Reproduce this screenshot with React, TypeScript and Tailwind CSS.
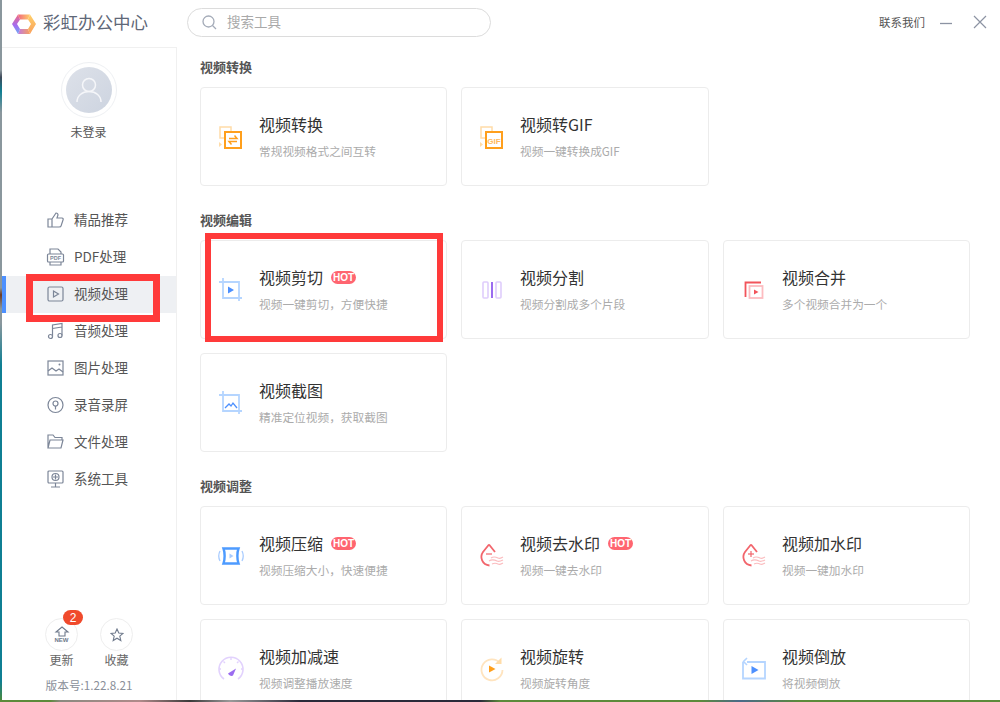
import type { ReactNode } from "react";

const cjk = "font-['Noto_Sans_CJK_SC','Noto_Sans',sans-serif]";

function Svg({ children, size = 30 }: { children: ReactNode; size?: number }) {
  return (
    <svg width={size} height={size} viewBox="0 0 30 30" fill="none" className="shrink-0">
      {children}
    </svg>
  );
}

const IconConvert = () => (
  <Svg>
    <rect x="4" y="5" width="11" height="11" stroke="#ffdca8" strokeWidth="1.5" />
    <path d="M3 20v5l3-2.500z" fill="#ffdca8" />
    <rect x="9" y="10" width="16" height="16" fill="#fff" stroke="#ff9f1c" strokeWidth="2" />
    <path d="M13 16.500h8l-2.500-3M21 19.500h-8l2.500 3" stroke="#ff9f1c" strokeWidth="1.500" />
  </Svg>
);

const IconGif = () => (
  <Svg>
    <rect x="4" y="5" width="11" height="11" stroke="#ffdca8" strokeWidth="1.5" />
    <path d="M3 20v5l3-2.500z" fill="#ffdca8" />
    <rect x="9" y="10" width="16" height="16" fill="#fff" stroke="#ff9f1c" strokeWidth="2" />
    <text x="17" y="21.500" textAnchor="middle" fontSize="8" fontWeight="700" fill="#ffb95e" fontFamily="Liberation Sans">GIF</text>
  </Svg>
);

const IconCut = ({ pic }: { pic?: boolean }) => (
  <Svg>
    <path d="M3 7h20v19M7 3v20h19" stroke="#b5d5ff" strokeWidth="1.800" />
    {pic ? (
      <path d="M9 20l4-4 2 2 2-3 4 5" stroke="#4d90fe" strokeWidth="1.300" />
    ) : (
      <path d="M12 11.500l6 3.500-6 3.500z" fill="#4d90fe" />
    )}
  </Svg>
);

const IconSplit = () => (
  <Svg>
    <rect x="6" y="7" width="5" height="16" rx="1" stroke="#dfcdfc" strokeWidth="1.600" />
    <rect x="19" y="7" width="5" height="16" rx="1" stroke="#dfcdfc" strokeWidth="1.600" />
    <path d="M15 7v16" stroke="#9b6cf0" strokeWidth="2" />
  </Svg>
);

const IconMerge = () => (
  <Svg>
    <path d="M6.500 22V7.500H22" stroke="#f2545b" strokeWidth="1.800" />
    <rect x="10.500" y="11" width="13" height="12" stroke="#fdbcc0" strokeWidth="1.800" />
    <path d="M15 14.500l4.500 2.500-4.500 2.500z" fill="#f2545b" />
  </Svg>
);

const IconCompress = () => (
  <Svg>
    <path d="M7.500 7.500h15c-1.500 4-1.500 11 0 15h-15c1.500-4 1.500-11 0-15z" stroke="#4d9bff" strokeWidth="2.400" />
    <path d="M13.500 12.500l4 2.500-4 2.500z" fill="#a9ccff" />
    <path d="M4 10c-1.500 3-1.500 7 0 10M26 10c1.500 3 1.500 7 0 10" stroke="#a9ccff" strokeWidth="1.300" />
  </Svg>
);

const IconSpeed = () => (
  <Svg>
    <path d="M8 25a12 12 0 1 1 14 0" stroke="#e2d2fd" strokeWidth="1.600" />
    <path d="M15 3v3M5 15H3M27 15h-2M7.500 7.500l1.500 1.500M22.500 7.500L21 9" stroke="#e2d2fd" strokeWidth="1.400" />
    <path d="M12 19.500l8-5-3 7c-1.500 1-4 0-5-2z" fill="#9b6cf0" />
  </Svg>
);

const IconDrop = ({ plus }: { plus?: boolean }) => (
  <Svg>
    <path d="M12 3.500L6 11c-3.500 5-1 13 6.500 13.500" stroke="#f2656c" strokeWidth="1.800" />
    <path d="M12 3.500L18 11" stroke="#f2656c" strokeWidth="1.800" />
    <path d="M9 13h6" stroke="#f2656c" strokeWidth="1.200" />
    {plus && <path d="M12 10v6" stroke="#f2656c" strokeWidth="1.200" />}
    <path d="M14 17c3-2 5-1 7 0s3 0 5-1M12 20c3-2 6-1 8 0s4 0 6-1M15 23c2-1 4-1 6 0s3 0 5-1" stroke="#fbbcbf" strokeWidth="1.200" />
  </Svg>
);

const IconRotate = () => (
  <Svg>
    <path d="M23 9a10.500 10.500 0 1 0 2.500 7" stroke="#ffe4bf" strokeWidth="1.800" />
    <path d="M24.500 3.500v6.500H18z" fill="#ffdca8" />
    <path d="M12 11.500l6.500 3.500-6.500 3.500z" fill="#ff9f1c" />
  </Svg>
);

const IconReverse = () => (
  <Svg>
    <path d="M8 8h18v16.500H4V8" stroke="#b5d5ff" strokeWidth="1.800" />
    <path d="M8 4L4.500 7.500 8 11" stroke="#b5d5ff" strokeWidth="1.600" />
    <path d="M12.500 12l7 4-7 4z" fill="#4d90fe" />
  </Svg>
);

const navIcon = { stroke: "#7c8698", strokeWidth: 1.2 };

const NavIcons: Record<string, ReactNode> = {
  thumb: (
    <path
      d="M2 9h4v8H2zM6 9l4-6c1.500 0 2 1 2 2l-1 3h5c1 0 1.500 1 1 2l-2 6c0 1-1 1-2 1H6"
      {...navIcon}
    />
  ),
  pdf: (
    <>
      <path d="M4 7V2h8l3 3v2M4 15v3h11v-3" {...navIcon} />
      <rect x="1.500" y="7" width="16" height="8" rx="1" {...navIcon} />
      <text x="9.500" y="13.300" textAnchor="middle" fontSize="5.500" fontWeight="700" fill="#7c8698" fontFamily="Liberation Sans">PDF</text>
    </>
  ),
  video: (
    <>
      <rect x="2" y="3" width="15" height="14" rx="1.500" {...navIcon} />
      <path d="M7.500 7l5 3-5 3z" {...navIcon} />
    </>
  ),
  music: (
    <>
      <circle cx="4.500" cy="15.500" r="2" {...navIcon} />
      <circle cx="14" cy="14.500" r="2" {...navIcon} />
      <path d="M6.500 15.500V4l9.500-1.500v12M6.500 7.500l9.500-1.500" {...navIcon} />
    </>
  ),
  image: (
    <>
      <rect x="2" y="3" width="15" height="14" {...navIcon} />
      <path d="M2 13l4-3 4 3 3-2 4 3" {...navIcon} />
      <circle cx="13.500" cy="6.500" r="1" fill="#7c8698" />
    </>
  ),
  record: (
    <>
      <circle cx="9.500" cy="10" r="7.500" {...navIcon} />
      <circle cx="9.500" cy="8.500" r="2.500" {...navIcon} />
      <path d="M9.500 11v3.500" {...navIcon} />
    </>
  ),
  folder: <path d="M2 16V3h5l2 2.500h7V8M2 16l2-8h13l-2 8z" {...navIcon} />,
  tool: (
    <>
      <rect x="2" y="2" width="15" height="12" rx="1" {...navIcon} />
      <circle cx="9.500" cy="8" r="3.500" {...navIcon} />
      <path d="M9.500 14v3.500M5 18h9M7 8h5M9.500 5.500v5" {...navIcon} />
    </>
  ),
};

const nav = [
  { label: "精品推荐", icon: "thumb" },
  { label: "PDF处理", icon: "pdf" },
  { label: "视频处理", icon: "video", active: true },
  { label: "音频处理", icon: "music" },
  { label: "图片处理", icon: "image" },
  { label: "录音录屏", icon: "record" },
  { label: "文件处理", icon: "folder" },
  { label: "系统工具", icon: "tool" },
];

type Tool = { title: string; desc: string; icon: ReactNode; hot?: boolean };

const sections: { name: string; tools: Tool[] }[] = [
  {
    name: "视频转换",
    tools: [
      { title: "视频转换", desc: "常规视频格式之间互转", icon: <IconConvert /> },
      { title: "视频转GIF", desc: "视频一键转换成GIF", icon: <IconGif /> },
    ],
  },
  {
    name: "视频编辑",
    tools: [
      { title: "视频剪切", desc: "视频一键剪切，方便快捷", icon: <IconCut />, hot: true },
      { title: "视频分割", desc: "视频分割成多个片段", icon: <IconSplit /> },
      { title: "视频合并", desc: "多个视频合并为一个", icon: <IconMerge /> },
      { title: "视频截图", desc: "精准定位视频，获取截图", icon: <IconCut pic /> },
    ],
  },
  {
    name: "视频调整",
    tools: [
      { title: "视频压缩", desc: "视频压缩大小，快速便捷", icon: <IconCompress />, hot: true },
      { title: "视频去水印", desc: "视频一键去水印", icon: <IconDrop />, hot: true },
      { title: "视频加水印", desc: "视频一键加水印", icon: <IconDrop plus /> },
      { title: "视频加减速", desc: "视频调整播放速度", icon: <IconSpeed /> },
      { title: "视频旋转", desc: "视频旋转角度", icon: <IconRotate /> },
      { title: "视频倒放", desc: "将视频倒放", icon: <IconReverse /> },
    ],
  },
];

function ToolCard({ tool }: { tool: Tool }) {
  return (
    <div className="flex h-[99px] items-center rounded-[4px] border border-[#ececec] bg-white pl-[15px]">
      {tool.icon}
      <div className="ml-[13px] flex flex-col pb-[3px]">
        <div className="flex h-6 items-center">
          <span className="text-base text-[#333]">{tool.title}</span>
          {tool.hot && (
            <span className="mt-[1px] ml-[8px] flex h-[13px] w-[25px] items-center justify-center rounded-full bg-[#ff6570] font-['Liberation_Sans',sans-serif] text-[10px] font-bold text-white">
              HOT
            </span>
          )}
        </div>
        <span className="mt-[7px] h-4 text-[11.7px] leading-4 text-[#ababab]">{tool.desc}</span>
      </div>
    </div>
  );
}

function Sidebar() {
  return (
    <aside className="flex w-[175px] shrink-0 flex-col border-t border-r border-[#f0f0f0]">
      <div className="flex flex-col items-center pt-[14px] pr-[1px]">
        <div className="flex h-[56px] w-[56px] items-center justify-center rounded-full border border-[#eef0f3]">
          <div className="flex h-[46px] w-[46px] items-center justify-center rounded-full bg-gradient-to-br from-[#dde1e9] to-[#cdd4e0]">
            <svg width="30" height="30" viewBox="0 0 30 30" fill="none">
              <circle cx="15" cy="10" r="6.500" stroke="#f5f6f9" strokeWidth="1.500" />
              <path d="M3 27c0-6 5-10.500 12-10.500S27 21 27 27" stroke="#f5f6f9" strokeWidth="1.500" />
            </svg>
          </div>
        </div>
        <span className="mt-[6px] text-xs leading-4 text-[#555]">未登录</span>
      </div>

      <nav className="mt-[62px] flex flex-col">
        {nav.map((item) => (
          <div
            key={item.label}
            className={`flex h-[37px] items-center border-l-4 pb-[2px] pl-[40px] ${
              item.active ? "border-[#4d90fe] bg-[#eef0f3]" : "border-transparent"
            }`}
          >
            <svg width="20" height="20" viewBox="0 0 20 20" fill="none" className="shrink-0">
              {NavIcons[item.icon]}
            </svg>
            <span className="ml-[8px] text-[13.5px] text-[#555]">{item.label}</span>
          </div>
        ))}
      </nav>

      <div className="mt-auto flex flex-col items-center pb-[7px]">
        <div className="flex gap-[22px]">
          <div className="relative flex w-[33px] flex-col items-center">
            <span className="absolute -top-[8px] left-[18px] flex h-[15px] w-[20px] items-center justify-center rounded-full bg-[#f04a2c] font-['Liberation_Sans',sans-serif] text-xs text-white">
              2
            </span>
            <div className="flex h-[33px] w-[33px] flex-col items-center justify-center rounded-full border border-[#eeeeee]">
              <svg width="16" height="11" viewBox="0 0 16 11" fill="none">
                <path d="M8 1l6 5h-3v4H5V6H2z" stroke="#6f7a8c" strokeWidth="1.100" />
              </svg>
              <span className="font-['Liberation_Sans',sans-serif] text-[6px] leading-[7px] font-bold text-[#6f7a8c]">NEW</span>
            </div>
            <span className="-mt-[1px] text-xs leading-5 whitespace-nowrap text-[#666]">更新</span>
          </div>
          <div className="flex w-[33px] flex-col items-center">
            <div className="flex h-[33px] w-[33px] items-center justify-center rounded-full border border-[#eeeeee]">
              <svg width="14" height="14" viewBox="0 0 14 14" fill="none">
                <path d="M7 1l1.800 4 4.200.400-3.200 2.800 1 4.300L7 10.200 3.200 12.500l1-4.300L1 5.400 5.200 5z" stroke="#6f7a8c" strokeWidth="1.100" />
              </svg>
            </div>
            <span className="-mt-[1px] text-xs leading-5 whitespace-nowrap text-[#666]">收藏</span>
          </div>
        </div>
        <span className="mt-[7px] text-[11.7px] leading-4 text-[#8a8f99]">版本号:1.22.8.21</span>
      </div>
    </aside>
  );
}

export default function App() {
  return (
    <div className={`relative h-[702px] w-[1000px] overflow-hidden bg-[linear-gradient(to_bottom,#8a979d_0%,#8a979d_10%,#3f4a5a_11%,#0f7f93_13%,#8a979d_16%,#8a979d_41%,#6b3a22_42%,#8a979d_44%,#8a979d_46%,#0f7f93_52%,#0f7f93_97%,#4f8a35_100%)] pb-[2px] pl-[2px] ${cjk}`}>
      <div className="flex h-full flex-col bg-white">
        <header className="flex h-[47px] shrink-0 items-center">
          <svg width="24" height="22" viewBox="0 0 24 22" fill="none" className="ml-[10px]">
            <defs>
              <linearGradient id="logoTop" x1="0" y1="0" x2="1" y2="0">
                <stop offset="0" stopColor="#f2697c" />
                <stop offset="1" stopColor="#ffd06a" />
              </linearGradient>
              <linearGradient id="logoRight" x1="0" y1="0" x2="0" y2="1">
                <stop offset="0" stopColor="#ffd06a" />
                <stop offset="1" stopColor="#f9a05c" />
              </linearGradient>
              <linearGradient id="logoBottom" x1="0" y1="0" x2="1" y2="0">
                <stop offset="0" stopColor="#c07be0" />
                <stop offset="1" stopColor="#f9a05c" />
              </linearGradient>
              <linearGradient id="logoLeft" x1="0" y1="0" x2="0" y2="1">
                <stop offset="0" stopColor="#f2697c" />
                <stop offset="0.550" stopColor="#a56cf0" />
                <stop offset="1" stopColor="#6fa8f5" />
              </linearGradient>
            </defs>
            <path d="M6 1.500h12L16 6.500H8z" fill="url(#logoTop)" />
            <path d="M18 1.500L24 11l-6 10-2-5 3-5-3-4.500z" fill="url(#logoRight)" />
            <path d="M18 21H6l2-5h8z" fill="url(#logoBottom)" />
            <path d="M6 21L0 11l6-9.500 2 5L5 11l3 5z" fill="url(#logoLeft)" />
          </svg>
          <span className="mb-[2px] ml-[7px] text-[17.5px] text-[#5f6878]">彩虹办公中心</span>
          <div className="mb-[2px] ml-[39px] flex h-[29px] w-[304px] items-center rounded-full border border-[#dcdcdc] pl-[13px]">
            <svg width="17" height="17" viewBox="0 0 17 17" fill="none">
              <circle cx="7.500" cy="7.500" r="5.500" stroke="#a4abb8" strokeWidth="1.300" />
              <path d="M11.500 11.500l3.500 3.500" stroke="#a4abb8" strokeWidth="1.300" />
            </svg>
            <span className="mb-[3px] ml-[9px] text-[13.5px] text-[#a9a9a9]">搜索工具</span>
          </div>
          <span className="mb-[2px] ml-auto text-[11.5px] text-[#555]">联系我们</span>
          <svg width="14" height="14" viewBox="0 0 14 14" fill="none" className="mb-[2px] ml-[14px]">
            <path d="M1 7.500h12" stroke="#8c93a3" strokeWidth="1.300" />
          </svg>
          <svg width="14" height="14" viewBox="0 0 14 14" fill="none" className="mr-[13px] mb-[3px] ml-[20px]">
            <path d="M1 1l12 12M13 1L1 13" stroke="#8c93a3" strokeWidth="1.200" />
          </svg>
        </header>

        <div className="flex min-h-0 flex-1">
          <Sidebar />
          <main className="flex-1 overflow-hidden pl-[23px]">
            {sections.map((section) => (
              <section key={section.name} className="mb-[14px]">
                <h2 className="flex h-[40px] items-center text-[13px] font-bold text-[#555]">{section.name}</h2>
                <div className="grid grid-cols-[247px_248px_247px] gap-x-[14px] gap-y-[14px]">
                  {section.tools.map((tool) => (
                    <ToolCard key={tool.title} tool={tool} />
                  ))}
                </div>
              </section>
            ))}
          </main>
        </div>
      </div>

      {/* wallpaper showing below the window */}
      <div className="absolute bottom-0 left-0 h-[2px] w-full bg-[linear-gradient(to_right,#5c8a3a_0%,#5c8a3a_5%,#8a8a80_6%,#b08a8a_14%,#3a3a3a_19%,#9a9a9a_23%,#2a2a3a_30%,#2a2a3a_48%,#5c8a3a_50%,#5c8a3a_70%,#4a6a8a_74%,#5c8a3a_80%,#5c8a3a_100%)]" />

      {/* red annotation boxes drawn over the screenshot */}
      <div className="absolute top-[274px] left-[26px] h-[48px] w-[134px] border-[7px] border-[#ff3a3a]" />
      <div className="absolute top-[233px] left-[205px] h-[109px] w-[238px] border-[6px] border-[#ff3a3a]" />
    </div>
  );
}
